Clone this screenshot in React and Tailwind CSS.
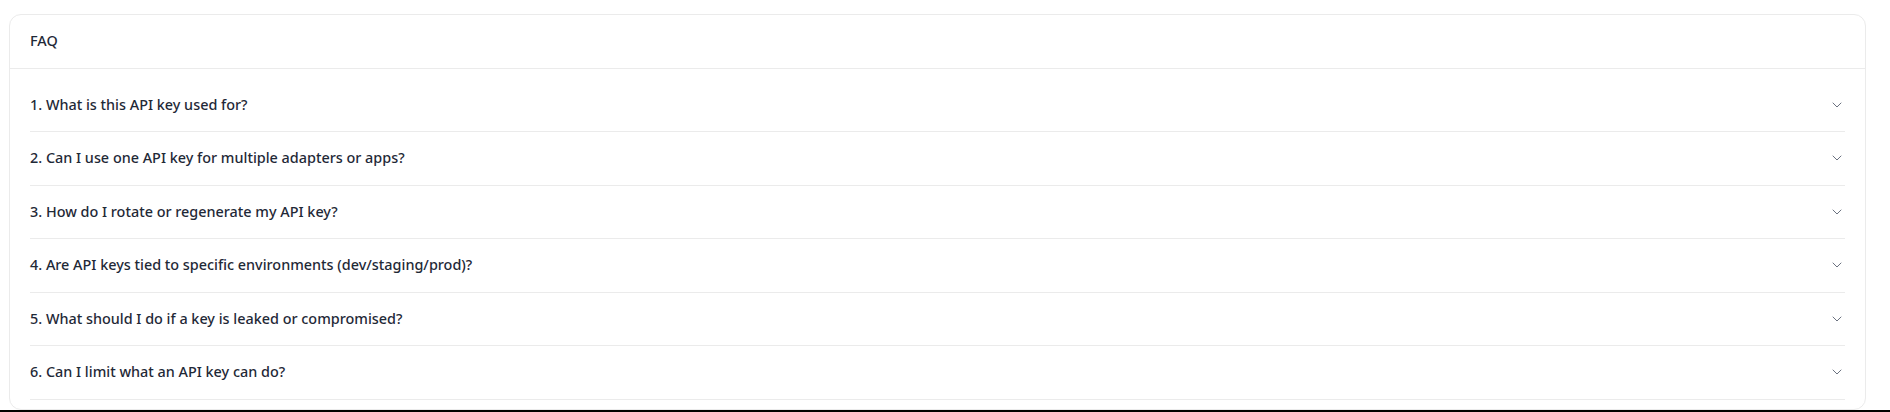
import { ChevronDown } from "lucide-react";

const questions = [
  "1. What is this API key used for?",
  "2. Can I use one API key for multiple adapters or apps?",
  "3. How do I rotate or regenerate my API key?",
  "4. Are API keys tied to specific environments (dev/staging/prod)?",
  "5. What should I do if a key is leaked or compromised?",
  "6. Can I limit what an API key can do?",
];

function FaqItem({ text }) {
  return (
    <button className="w-full flex items-center justify-between py-4 border-b border-[#ebebeb] text-left">
      <span className="text-[14.4px] leading-[20.5px] font-medium text-[#1f2937]">{text}</span>
      <ChevronDown size={16} strokeWidth={1.5} className="text-[#6b7280]" />
    </button>
  );
}

export default function App() {
  return (
    <div
      className="h-[412px] flex flex-col bg-white overflow-hidden"
      style={{ fontFamily: '"Noto Sans", "Open Sans", sans-serif' }}
    >
      <div className="flex-1 min-h-0 pt-[14px] pl-[9px] pr-[24px]">
        <div className="h-full rounded-xl border border-[#ebebeb] bg-white overflow-hidden">
          <div className="px-5 py-4 border-b border-[#ebebeb]">
            <h2 className="text-[14.4px] leading-[20.5px] font-medium text-[#1f2937]">FAQ</h2>
          </div>
          <div className="px-5 pt-2.5">
            {questions.map((q) => (
              <FaqItem key={q} text={q} />
            ))}
          </div>
        </div>
      </div>
      <div className="h-[2px] bg-black shrink-0" />
    </div>
  );
}
